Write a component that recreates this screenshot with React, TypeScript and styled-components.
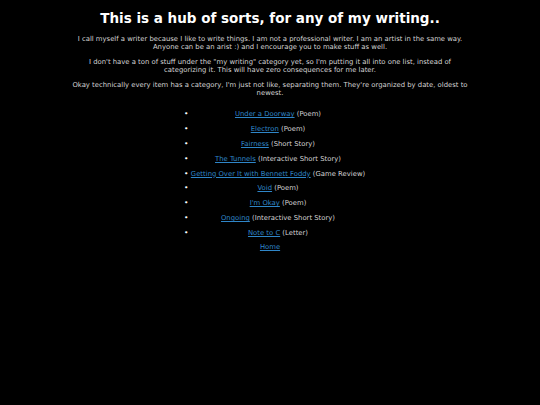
import React from 'react';
import styled, { createGlobalStyle } from 'styled-components';

const GlobalStyle = createGlobalStyle`
  html, body {
    margin: 0;
    background: #000;
  }
  body {
    font-family: "DejaVu Sans", Verdana, sans-serif;
    color: #d4d4d4;
    -webkit-font-smoothing: antialiased;
  }
`;

const Page = styled.div`
  padding: 8px 8px;
  text-align: center;
  background: #000;
  min-height: 389px;
`;

const Title = styled.h1`
  font-size: 13.5px;
  font-weight: bold;
  color: #fff;
  margin: 2px 0 9px;
`;

const Para = styled.p`
  font-size: 6.85px;
  line-height: 8px;
  margin: 0 0 7px;
`;

const List = styled.ul`
  display: inline-block;
  margin: 6px 0 0;
  padding-left: 16px;
  font-size: 6.85px;
  line-height: 8px;
`;

const Item = styled.li`
  text-align: center;
  margin-bottom: 6.9px;

  &::marker {
    content: "\\2022\\00a0";
    font-size: 7.5px;
    color: #fff;
  }
`;

const Link = styled.a`
  color: #2f86c8;
`;

const HomeLink = styled.a`
  display: block;
  color: #2f86c8;
  font-size: 6.85px;
  margin-top: -1px;
`;

type Entry = { title: string; kind: string };

const entries: Entry[] = [
  { title: 'Under a Doorway', kind: 'Poem' },
  { title: 'Electron', kind: 'Poem' },
  { title: 'Fairness', kind: 'Short Story' },
  { title: 'The Tunnels', kind: 'Interactive Short Story' },
  { title: 'Getting Over It with Bennett Foddy', kind: 'Game Review' },
  { title: 'Void', kind: 'Poem' },
  { title: "I'm Okay", kind: 'Poem' },
  { title: 'Ongoing', kind: 'Interactive Short Story' },
  { title: 'Note to C', kind: 'Letter' },
];

export default function App() {
  return (
    <>
      <GlobalStyle />
      <Page>
        <Title>This is a hub of sorts, for any of my writing..</Title>
        <Para>
          I call myself a writer because I like to write things. I am not a professional writer. I am an artist in the same way.
          <br />
          Anyone can be an arist :) and I encourage you to make stuff as well.
        </Para>
        <Para>
          I don't have a ton of stuff under the "my writing" category yet, so I'm putting it all into one list, instead of
          <br />
          categorizing it. This will have zero consequences for me later.
        </Para>
        <Para>
          Okay technically every item has a category, I'm just not like, separating them. They're organized by date, oldest to
          <br />
          newest.
        </Para>
        <List>
          {entries.map((e) => (
            <Item key={e.title}>
              <Link href="#">{e.title}</Link> ({e.kind})
            </Item>
          ))}
        </List>
        <HomeLink href="#">Home</HomeLink>
      </Page>
    </>
  );
}
